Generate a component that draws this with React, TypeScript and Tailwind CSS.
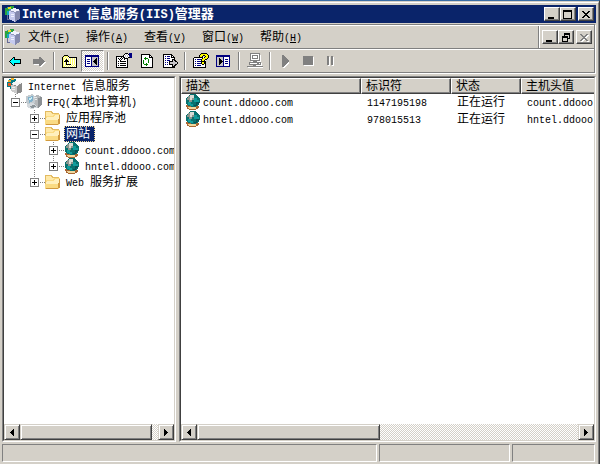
import React from "react";

const LATIN = "font-['Liberation_Mono','Noto_Sans_CJK_SC',monospace]";
const RAISED =
  "bg-[#d4d0c8] border border-t-[#d4d0c8] border-l-[#d4d0c8] border-r-[#404040] border-b-[#404040] shadow-[inset_1px_1px_0_#fff,inset_-1px_-1px_0_#808080]";
const BUTTON =
  "bg-[#d4d0c8] border border-t-white border-l-white border-r-[#404040] border-b-[#404040] shadow-[inset_-1px_-1px_0_#808080]";
const SUNKEN =
  "border border-t-[#808080] border-l-[#808080] border-r-white border-b-white";
const WELL =
  "border border-t-[#404040] border-l-[#404040] border-r-[#d4d0c8] border-b-[#d4d0c8] bg-white";

/* Splits mixed text so that Latin runs take half the width of a Han character. */
function Label({ text, small = "text-[10px]" }: { text: string; small?: string }) {
  const runs = text.match(/[\x00-\x7f]+|[^\x00-\x7f]+/g) ?? [];
  return (
    <span className="whitespace-pre">
      {runs.map((run, i) =>
        run.charCodeAt(0) < 128 ? (
          <span key={i} className={small}>{run}</span>
        ) : (
          <span key={i}>{run}</span>
        ),
      )}
    </span>
  );
}

function Svg({ children, w = 16, h = 16 }: { children: React.ReactNode; w?: number; h?: number }) {
  return (
    <svg width={w} height={h} viewBox={`0 0 ${w} ${h}`} className="block shrink-0" shapeRendering="crispEdges" aria-hidden="true">
      {children}
    </svg>
  );
}

/* Draws a bitmap icon; every character is one pixel looked up in the palette. */
const PALETTE: Record<string, string> = {
  k: "#000000", w: "#ffffff", c: "#00ffff", g: "#808080", y: "#ffff66", Y: "#ffff00",
  n: "#000080", v: "#008000", l: "#c6c3c6", o: "#808000", s: "#3c50a8",
};
function Pixels({ rows }: { rows: string[] }) {
  return (
    <Svg>
      {rows.flatMap((row, y) =>
        (row.match(/(.)\1*/g) ?? []).reduce<{ x: number; out: React.ReactNode[] }>(
          (acc, run) => {
            const fill = PALETTE[run[0]];
            if (fill) acc.out.push(<rect key={`${acc.x}-${y}`} x={acc.x} y={y} width={run.length} height={1} fill={fill} />);
            acc.x += run.length;
            return acc;
          },
          { x: 0, out: [] },
        ).out,
      )}
    </Svg>
  );
}

const back = [
  "", "", "", "", ".....kk", "....kck", "...kcckkkkkkk", "..kccccccccck", ".kcccccccccck", "..kccccccccck", "...kcckkkkkkk", "....kck", ".....kk",
];
const forward = [
  "", "", "", "", "........gg", "........ggg", "..gggggggggg", "..ggggggggggg", "..gggggggggggg", "..gggggggggggww", "..ggggggggggww", "...wwwwwgggww", "........ggww", ".........ww",
];
const folderUp = [
  "", "", "..kkkk", ".kyyyyk", "kywywywkkkkkkkk", "kyywywywywywywk", "kywykwywywywywk", "kywkkkywywywywk", "kykkkkkwywywywk", "kywykwywywywywk", "kywykwywywywywk", "kywykkkkkwywywk", "kywywywywywywyk", "kyywywywywywywk", "kkkkkkkkkkkkkkk",
];
const showTree = [
  "", "", "nnnnnnnnnnnnnn", "nnnnnnnnnnnnnn", "nwwwwwnlllllln", "nwwwwwnllllkln", "nwnnnwnlllkkln", "nwwwwwnllkkkln", "nwnnnwnlkkkkln", "nwwwwwnllkkkln", "nwnnnwnlllkkln", "nwwwwwnllllkln", "nwwwwwnlllllln", "nnnnnnnnnnnnnn",
];
const actionPane = [
  "", "", "nnnnnnnnnnnnnn", "nnnnnnnnnnnnnn", "nllllllnwwwwwn", "nllklllnwwwwwn", "nllkkllnwnnnwn", "nllkkklnwwwwwn", "nllkkkknwnnnwn", "nllkkklnwwwwwn", "nllkkllnwnnnwn", "nllklllnwwwwwn", "nllllllnwwwwwn", "nnnnnnnnnnnnnn",
];
const properties = [
  ".........kkk.nnn", "........kwlwknnn", ".......kwlwlwnnn", "kkkkkkkkwlwlwsnn", "kwwwwkwkkwlwkknn", "kwkwkwkwkkkk", "kwwkwkwwkwwk", "kwwwkwwwwwwk", "kwkwkkkkkkwk", "kwwwwwwwwwwk", "kwkwkkkkkkwk", "kwwwwwwwwwwk", "kwkwkkkkkkwk", "kwwwwwwwwwwk", "kkkkkkkkkkkk",
];
const refresh = [
  "", "..kkkkkkkkk", "..kwwwwwwwkk", "..kwwwwwwwkwk", "..kwwwvwwwkkkk", "..kwwvvvvwwwwk", "..kwwwvwwvwwwk", "..kwvwwwwvwwwk", "..kwvwwwwvwwwk", "..kwvwwwwvwwwk", "..kwvwwvwwwwwk", "..kwwvvvvwwwwk", "..kwwwwvwwwwwk", "..kwwwwwwwwwwk", "..kkkkkkkkkkkk",
];
const exportList = [
  "", ".kkkkkkkkk", ".kwwwwwwwkk", ".kwnwnnnwkwk", ".kwwwwwwwkkkk", ".kwnwnnnwwwwk", ".kwwwwwwwwkkk", ".kwnwnnnwwklkk", ".kwwwwwkkkkllkk", ".kwnwnwklllllllk", ".kwwwwwklllllllk", ".kwnwnwkkkkllkk", ".kwwwwwwwwklkk", ".kwwwwwwwwkkk", ".kkkkkkkkkkkk",
];
const help = [
  "........kkkkkk", ".......kYYYYYYk", "......kYYYkkYYYk", "......kYYk..kYYk", ".kkkkkkkkkwkYYYk", "kwwwwwwwwkYYYYk", "kwnwnnnnkYYYkk", "kwwwwwwwkYYkw", "kwnwnnnnkkkkk", "kwwwwwwwkYYkk", "kwnwnnnnkYYkk", "kwwwwwwwwkkwk", "kwnwnnnnwwwwk", "kwwwwwwwwwwwk", "kkkkkkkkkkkkk",
];
const computer = [
  "...gggggggggg", "...gwwwwwwwwg", "...gwggggggwgw", "...gwgwwwwgwgw", "...gwgwwwwgwgw", "...gwggggggwgw", "...gwwwwwwwwgw", "...ggggggggggw", "....wwggggwwww", "..gggggggggggg", "..gwwwwwwwggwgw", "..ggggggggggggw", "......gggwwwwww", "gggggggggggggggg", ".wwwwwwwwwwwwwww", "",
];

function ServerIcon() {
  return (
    <Svg>
      <circle cx="4.5" cy="5" r="4.5" fill="#15a6c4" />
      <path d="M0 2h4v3H2v4H0zM5 0h4v3H6z" fill="#2ba43d" />
      <path d="M3 1h3v2H3zM6 3h3v2H6z" fill="#ead52b" />
      <path d="M4 5l5-3 6 2v9l-5 3-6-3z" fill="#9399bd" />
      <path d="M5 4l4-2 6 2-5 2z" fill="#f1f2ff" />
      <path d="M4 5l6 2v9l-6-3z" fill="#c6cbef" />
      <path d="M6 8h3v1H6zM6 10h3v1H6z" fill="#eef0ff" />
      <path d="M10 7l5-3v9l-5 3z" fill="#8489ae" />
      <path d="M2 9h1v4h2v1H2z" fill="#686d97" />
    </Svg>
  );
}
function RootIcon() {
  return (
    <Svg>
      <path d="M2 1h7v2h2v4H9v4H3V9H0V4h2z" fill="#087c87" />
      <path d="M1 2h3v2H1zM4 0h3v2H4zM7 4h3v2H7z" fill="#f0b12d" />
      <path d="M1 5h3v3H1z" fill="#de5821" />
      <path d="M4 7l5-4 6 2v9l-5 2-6-3z" fill="#8b8b8b" />
      <path d="M4 6l5-3 6 2-5 3z" fill="#f5f5f5" />
      <path d="M4 7l6 1v8l-6-3z" fill="#cacaca" />
      <path d="M5 9h3v1H5zM5 11h3v1H5z" fill="#eee" />
    </Svg>
  );
}
function HostIcon() {
  return (
    <Svg>
      <path d="M7 2l5-1 4 2v8l-4 3-5-2z" fill="#b4b7b9" />
      <path d="M12 4l4-1v8l-4 3z" fill="#8b9094" />
      <path d="M0 2l6-2 3 2v7l-5 2-4-2z" fill="#c3cbd0" />
      <path d="M2 3l5-1v5L3 9z" fill="#7fb0cb" />
      <path d="M3 4l3-1v2L3 6z" fill="#c9edf5" />
      <path d="M1 10l6-1 4 3v2l-6 1-4-2z" fill="#d5dade" />
      <path d="M3 12l5-1 2 2-5 1z" fill="#8b9499" />
      <path d="M8 3h3v1H8zM9 5h2v1H9z" fill="#e8eaeb" />
    </Svg>
  );
}
function FolderIcon() {
  return (
    <Svg>
      <path d="M0 1h6l2 2h6v12H0z" fill="#e3bb62" />
      <path d="M1 2h4l2 2h6v9H1z" fill="#ffe9a8" />
      <path d="M1 6h6l2-2h6v9l-2 2H0z" fill="#fadb83" />
      <path d="M2 7h6l2-2h4v5H1z" fill="#fff0bd" />
      <path d="M14 5h1v9h-2v1H1v-1h12z" fill="#d19a40" />
    </Svg>
  );
}
function SiteIcon() {
  return (
    <Svg>
      <circle cx="8" cy="7" r="7" fill="#08716e" />
      <path d="M3 2h3v1h3v3H7v2H4V6H2V4h1z" fill="#8c948d" />
      <path d="M5 1h4v3H7v2H5z" fill="#d9dbd4" />
      <path d="M9 4h3v2h2v3h-3V8H9zM3 8h3v2h2v2H5v-1H3z" fill="#109c9b" />
      <path d="M11 8h3v2h-2v2h-3v-1h2z" fill="#075256" />
      <path d="M1 11h2v1h3v1h5v-1h3v2h-1v1h-2v1H4v-1H2v-2H1z" fill="#a96632" />
      <path d="M3 13h8v2H4z" fill="#f0d79c" />
    </Svg>
  );
}

type Glyph = "min" | "max" | "restore" | "close";
function WindowGlyph({ kind, disabled }: { kind: Glyph; disabled?: boolean }) {
  const cross = "M0 0h2v1h1v1h2V1h1V0h2v1H7v1H6v1H5v1h1v1h1v1h1v1H6V6H5V5H3v1H2v1H0V6h1V5h1V4h1V3H2V2H1V1H0z";
  return (
    <Svg w={10} h={9}>
      {kind === "min" && <path d="M1 7h6v2H1z" fill="#000" />}
      {kind === "max" && <path d="M0 0h9v9H0zM1 2v6h7V2z" fill="#000" fillRule="evenodd" />}
      {kind === "restore" && <path d="M3 0h6v6H7v3H1V3h2zM4 2v1h3v2h1V2zM2 5v3h4V5z" fill="#000" fillRule="evenodd" />}
      {kind === "close" && disabled && <path d={cross} fill="#fff" transform="translate(2 2)" />}
      {kind === "close" && <path d={cross} fill={disabled ? "#808080" : "#000"} transform="translate(1 1)" />}
    </Svg>
  );
}
function WindowButtons({ middle, name, disabled }: { middle: Glyph; name: string; disabled?: boolean }) {
  const cls = `flex h-3.5 w-4 items-center justify-center ${BUTTON}`;
  return (
    <div className="flex">
      <button className={cls} aria-label={`${name} 最小化`}><WindowGlyph kind="min" /></button>
      <button className={cls} aria-label={`${name} 还原`}><WindowGlyph kind={middle} /></button>
      <button className={`ml-0.5 ${cls}`} aria-label={`${name} 关闭`} disabled={disabled}><WindowGlyph kind="close" disabled={disabled} /></button>
    </div>
  );
}

const menus = [["文件", "F"], ["操作", "A"], ["查看", "V"], ["窗口", "W"], ["帮助", "H"]];

function Tool({ name, pressed, disabled, children }: { name: string; pressed?: boolean; disabled?: boolean; children: React.ReactNode }) {
  const face = pressed
    ? "border border-t-[#808080] border-l-[#808080] border-r-white border-b-white bg-[repeating-conic-gradient(#fff_0_25%,#d4d0c8_0_50%)] bg-[length:2px_2px]"
    : "";
  return (
    <button aria-label={name} aria-pressed={pressed} disabled={disabled} className={`flex h-[22px] w-[23px] items-center justify-center ${face}`}>
      {children}
    </button>
  );
}
function Separator() {
  return <div className="mx-[3px] h-[18px] w-0.5 border-l border-r border-l-[#808080] border-r-white" />;
}

type Node = { text: string; icon: React.ReactNode; level: number; guides: string[]; selected?: boolean };
/* Guide cells: "-" and "+" are expanders, "|" is a passing line, " " is empty. */
const nodes: Node[] = [
  { text: "Internet 信息服务", icon: <RootIcon />, level: 0, guides: [] },
  { text: "FFQ(本地计算机)", icon: <HostIcon />, level: 1, guides: ["-end"] },
  { text: "应用程序池", icon: <FolderIcon />, level: 2, guides: [" ", "+"] },
  { text: "网站", icon: <FolderIcon />, level: 2, guides: [" ", "-"], selected: true },
  { text: "count.ddooo.com", icon: <SiteIcon />, level: 3, guides: [" ", "|", "+"] },
  { text: "hntel.ddooo.com", icon: <SiteIcon />, level: 3, guides: [" ", "|", "+end"] },
  { text: "Web 服务扩展", icon: <FolderIcon />, level: 2, guides: [" ", "+end"] },
];
function Guide({ kind }: { kind: string }) {
  const box = kind[0] === "+" || kind[0] === "-";
  return (
    <Svg w={19} h={16}>
      {kind !== " " && (
        <path d={kind.endsWith("end") ? "M8.5 0v8" : "M8.5 0v16"} stroke="#808080" strokeDasharray="1 1" fill="none" />
      )}
      {box && (
        <>
          <path d="M14 8.5h5" stroke="#808080" strokeDasharray="1 1" />
          <path d="M4.5 4.5h8v8h-8z" fill="#fff" stroke="#808080" />
          <path d="M6 8.5h5" stroke="#000" />
          {kind[0] === "+" && <path d="M8.5 6v5" stroke="#000" />}
        </>
      )}
    </Svg>
  );
}

function ScrollBar({ thumb }: { thumb: string }) {
  const cls = `flex size-4 shrink-0 items-center justify-center ${RAISED}`;
  return (
    <div className="flex h-4 shrink-0 bg-[repeating-conic-gradient(#fff_0_25%,#d4d0c8_0_50%)] bg-[length:2px_2px]">
      <button className={cls} aria-label="向左滚动">
        <Svg w={6} h={7}><path d="M4 0h1v7H4V6H3V5H2V4H1V3h1V2h1V1h1z" /></Svg>
      </button>
      <div className="min-w-0 flex-1"><div className={`h-4 ${thumb} ${RAISED}`} /></div>
      <button className={cls} aria-label="向右滚动">
        <Svg w={6} h={7}><path d="M1 0h1v1h1v1h1v1h1v1H4v1H3v1H2v1H1z" /></Svg>
      </button>
    </div>
  );
}

const columns = [
  { name: "描述", width: "w-[180px]" },
  { name: "标识符", width: "w-[90px]" },
  { name: "状态", width: "w-[70px]" },
  { name: "主机头值", width: "w-[160px]" },
];
const sites = [
  { host: "count.ddooo.com", id: "1147195198" },
  { host: "hntel.ddooo.com", id: "978015513" },
];

export default function App() {
  const cell = "block h-[17px] leading-[19px]";
  return (
    <div className={`flex h-screen flex-col overflow-hidden border-t border-r border-t-[#3a6ea5] border-r-[#404040] bg-[#d4d0c8] text-[12px] text-black ${LATIN}`}>
      <div className="mt-px flex min-h-0 flex-1 flex-col border-t border-r border-t-white border-r-[#808080] px-0.5 pt-0.5 pb-0.5">
        <header className="flex h-[18px] shrink-0 items-center bg-[#0a246a] pr-0.5 pl-[3px] text-white">
          <ServerIcon />
          <h1 className="ml-px h-[18px] flex-1 text-[13px] leading-5 font-bold">
            <Label text="Internet 信息服务(IIS)管理器" small="text-[12px]" />
          </h1>
          <WindowButtons middle="max" name="窗口" />
        </header>

        <div className="mt-px mr-px shrink-0 border border-[#808080] shadow-[1px_1px_0_#fff]">
          <div className="flex h-6 items-stretch border-t border-b border-t-white border-b-[#808080]">
            <nav className="flex flex-1 items-center border-l border-l-white pl-px">
              <ServerIcon />
              {menus.map(([text, key]) => (
                <button key={key} className="h-5 w-[58px] pl-[7px] text-left leading-[22px] whitespace-nowrap">
                  {text}
                  <span className="text-[10px]">(<u>{key}</u>)</span>
                </button>
              ))}
            </nav>
            <div className="flex items-center border-l border-l-[#808080]">
              <div className="flex h-full items-center border-l border-l-white pr-0.5 pl-0.5">
                <WindowButtons middle="restore" name="子窗口" disabled />
              </div>
            </div>
          </div>
          <div className="flex h-[23px] items-center border-t border-l border-white" role="toolbar">
            <Tool name="后退"><Pixels rows={back} /></Tool>
            <Tool name="前进" disabled><Pixels rows={forward} /></Tool>
            <Separator />
            <Tool name="上一级"><Pixels rows={folderUp} /></Tool>
            <Tool name="显示树" pressed><Pixels rows={showTree} /></Tool>
            <Separator />
            <Tool name="属性"><Pixels rows={properties} /></Tool>
            <Tool name="刷新"><Pixels rows={refresh} /></Tool>
            <Tool name="导出列表"><Pixels rows={exportList} /></Tool>
            <Separator />
            <Tool name="帮助"><Pixels rows={help} /></Tool>
            <Tool name="操作窗格"><Pixels rows={actionPane} /></Tool>
            <Separator />
            <Tool name="连接计算机" disabled><Pixels rows={computer} /></Tool>
            <Separator />
            <Tool name="启动" disabled>
              <Svg><path d="M5 4l7 6-6 5H5z" fill="#fff" /><path d="M4 2h1l6 6-6 6H4z" fill="#808080" /></Svg>
            </Tool>
            <Tool name="停止" disabled>
              <Svg><path d="M3 4h10v9H3z" fill="#fff" /><path d="M2 3h10v9H2z" fill="#808080" /></Svg>
            </Tool>
            <Tool name="暂停" disabled>
              <Svg><path d="M4 4h2v9H4zM8 4h2v9H8z" fill="#fff" /><path d="M3 3h2v9H3zM7 3h2v9H7z" fill="#808080" /></Svg>
            </Tool>
          </div>
        </div>

        <main className="mt-[3px] flex min-h-0 flex-1 gap-[3px]">
          <section className={`flex w-[174px] shrink-0 ${SUNKEN}`}>
            <div className={`flex min-w-0 flex-1 flex-col ${WELL}`}>
              <ul className="min-h-0 flex-1 overflow-hidden pl-[3px]" role="tree">
                {nodes.map((n) => (
                  <li key={n.text} role="treeitem" aria-level={n.level + 1} aria-selected={!!n.selected} className="flex h-4 items-center">
                    {n.guides.map((g, i) => <Guide key={i} kind={g} />)}
                    {n.icon}
                    <span
                      className={`ml-[3px] h-4 border border-dotted px-px leading-4 whitespace-nowrap ${
                        n.selected ? "w-[31px] border-[#f5db95] bg-[#0a246a] text-white" : "border-transparent"
                      }`}
                    >
                      <Label text={n.text} />
                    </span>
                  </li>
                ))}
              </ul>
              <ScrollBar thumb="w-[96%]" />
            </div>
          </section>

          <section className={`flex min-w-0 flex-1 ${SUNKEN}`}>
            <div className={`flex min-w-0 flex-1 flex-col ${WELL}`}>
              <div className="min-h-0 flex-1 overflow-hidden">
                <table className="w-[500px] table-fixed border-separate border-spacing-0">
                  <thead>
                    <tr>
                      {columns.map((c) => (
                        <th key={c.name} className={`p-0 pl-1 text-left font-normal ${c.width} ${BUTTON}`}>
                          <span className="block h-3.5 leading-4">{c.name}</span>
                        </th>
                      ))}
                    </tr>
                  </thead>
                  <tbody>
                    {sites.map((s) => (
                      <tr key={s.host}>
                        <td className="p-0 pl-1">
                          <span className="flex h-[17px] gap-0.5 leading-[19px]"><SiteIcon /><Label text={s.host} /></span>
                        </td>
                        <td className="p-0 pl-1.5"><span className={cell}><Label text={s.id} /></span></td>
                        <td className="p-0 pl-1.5"><span className={cell}>正在运行</span></td>
                        <td className="p-0 pl-1.5"><span className={cell}><Label text={s.host} /></span></td>
                      </tr>
                    ))}
                  </tbody>
                </table>
              </div>
              <ScrollBar thumb="w-[48%]" />
            </div>
          </section>
        </main>

        <footer className="mt-0.5 flex h-[18px] shrink-0 gap-0.5 pr-px">
          <div className={`flex-1 ${SUNKEN}`} />
          <div className={`w-[131px] ${SUNKEN}`} />
          <div className={`w-[83px] ${SUNKEN}`} />
        </footer>
      </div>
    </div>
  );
}
